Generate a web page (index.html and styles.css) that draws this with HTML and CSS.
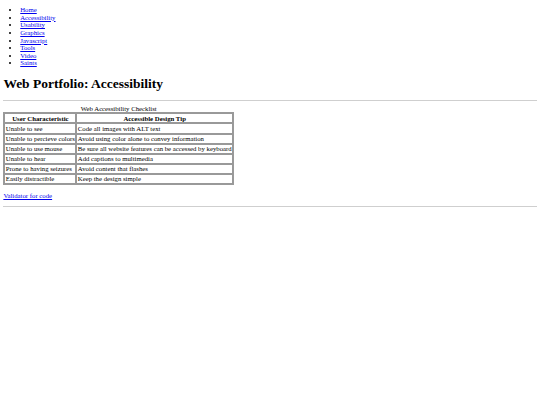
FILE: index.html
```html
<!DOCTYPE html>
<html>
<head>
<meta charset="utf-8">
<title>Web Portfolio: Accessibility</title>
<link rel="stylesheet" href="styles.css">
</head>
<body class="page">
<ul class="nav">
<li><a href="#">Home</a></li>
<li><a href="#">Accessibility</a></li>
<li><a href="#">Usability</a></li>
<li><a href="#">Graphics</a></li>
<li><a href="#">Javascript</a></li>
<li><a href="#">Tools</a></li>
<li><a href="#">Video</a></li>
<li><a href="#">Saints</a></li>
</ul>
<h1 class="title">Web Portfolio: Accessibility</h1>
<hr class="rule">
<table class="checklist">
<caption>Web Accessibility Checklist</caption>
<tr><th>User Characteristic</th><th>Accessible Design Tip</th></tr>
<tr><td>Unable to see</td><td>Code all images with ALT text</td></tr>
<tr><td>Unable to percieve colors</td><td>Avoid using color alone to convey information</td></tr>
<tr><td>Unable to use mouse</td><td>Be sure all website features can be accessed by keyboard</td></tr>
<tr><td>Unable to hear</td><td>Add captions to multimedia</td></tr>
<tr><td>Prone to having seizures</td><td>Avoid content that flashes</td></tr>
<tr><td>Easily distractible</td><td>Keep the design simple</td></tr>
</table>
<p class="validator"><a href="#">Validator for code</a></p>
<hr class="rule">
</body>
</html>
```
FILE: styles.css
```css
.page {
  margin: 3.375px;
  font-family: "Liberation Serif", "Times New Roman", serif;
  font-size: 6.75px;
  line-height: 7.6px;
  color: #000;
  background: #fff;
}
.nav {
  margin: 2.8px 0 6.75px;
  padding-left: 16.875px;
}
.nav a, .validator a {
  color: #0000ee;
}
.title {
  font-size: 13.5px;
  line-height: 15.5px;
  margin: 9px 0;
}
.rule {
  margin: 3.375px 0;
  border: 0;
  border-top: 1px solid #cfcfcf;
  height: 0;
}
.checklist {
  border-collapse: separate;
  border-spacing: 0.4px;
  border: 1px solid #9a9a9a;
}
.checklist caption {
  text-align: center;
}
.checklist th, .checklist td {
  padding: 0.25px 0.42px;
  border: 1px solid #999;
  text-align: left;
}
.checklist th {
  text-align: center;
  font-weight: bold;
}
.validator {
  margin: 6.75px 0;
}
```
